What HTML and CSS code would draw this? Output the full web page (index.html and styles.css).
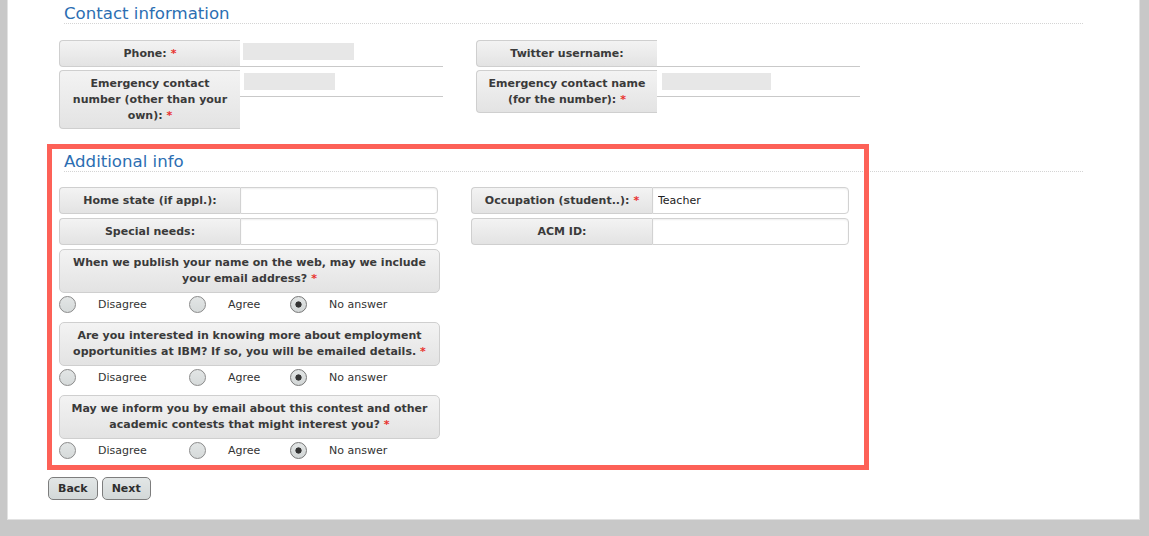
FILE: index.html
```html
<!DOCTYPE html>
<html lang="en">
<head>
    <meta charset="UTF-8">
    <meta name="viewport" content="width=device-width, initial-scale=1.0">
    <title>Registration - Additional info</title>
    <link rel="stylesheet" href="styles.css">
</head>
<body>
    <main class="page">
        <!-- Contact information -->
        <section class="group">
            <h2 class="group-title">Contact information</h2>
            <div class="contact-grid">
                <div class="col">
                    <div class="info-row">
                        <div class="tag">Phone:<span class="req">*</span></div>
                        <div class="value"><span class="blur blur-phone"></span></div>
                    </div>
                    <div class="info-row">
                        <div class="tag">Emergency contact number (other than your own):<span class="req">*</span></div>
                        <div class="value"><span class="blur blur-number"></span></div>
                    </div>
                </div>
                <div class="col">
                    <div class="info-row">
                        <div class="tag">Twitter username:</div>
                        <div class="value"></div>
                    </div>
                    <div class="info-row">
                        <div class="tag">Emergency contact name (for the number):<span class="req">*</span></div>
                        <div class="value"><span class="blur blur-name"></span></div>
                    </div>
                </div>
            </div>
        </section>

        <!-- Additional info -->
        <section class="group additional">
            <div class="highlight"></div>
            <h2 class="group-title">Additional info</h2>
            <form class="extra-grid" id="extra-form">
                <div class="col">
                    <div class="info-row">
                        <label class="tag" for="home-state">Home state (if appl.):</label>
                        <input class="field" type="text" id="home-state" name="home_state">
                    </div>
                    <div class="info-row">
                        <label class="tag" for="special-needs">Special needs:</label>
                        <input class="field" type="text" id="special-needs" name="special_needs">
                    </div>

                    <div class="question">When we publish your name on the web, may we include your email address?<span class="req">*</span></div>
                    <div class="choices">
                        <label class="choice wide"><input type="radio" name="publish_email" value="disagree"> Disagree</label>
                        <label class="choice"><input type="radio" name="publish_email" value="agree"> Agree</label>
                        <label class="choice"><input type="radio" name="publish_email" value="none" checked> No answer</label>
                    </div>

                    <div class="question">Are you interested in knowing more about employment opportunities at IBM? If so, you will be emailed details.<span class="req">*</span></div>
                    <div class="choices">
                        <label class="choice wide"><input type="radio" name="ibm_jobs" value="disagree"> Disagree</label>
                        <label class="choice"><input type="radio" name="ibm_jobs" value="agree"> Agree</label>
                        <label class="choice"><input type="radio" name="ibm_jobs" value="none" checked> No answer</label>
                    </div>

                    <div class="question">May we inform you by email about this contest and other academic contests that might interest you?<span class="req">*</span></div>
                    <div class="choices">
                        <label class="choice wide"><input type="radio" name="contest_mail" value="disagree"> Disagree</label>
                        <label class="choice"><input type="radio" name="contest_mail" value="agree"> Agree</label>
                        <label class="choice"><input type="radio" name="contest_mail" value="none" checked> No answer</label>
                    </div>
                </div>
                <div class="col">
                    <div class="info-row">
                        <label class="tag" for="occupation">Occupation (student..):<span class="req">*</span></label>
                        <input class="field" type="text" id="occupation" name="occupation" value="Teacher">
                    </div>
                    <div class="info-row">
                        <label class="tag" for="acm-id">ACM ID:</label>
                        <input class="field" type="text" id="acm-id" name="acm_id">
                    </div>
                </div>
            </form>
        </section>

        <div class="actions">
            <button type="button" class="btn">Back</button>
            <button type="submit" class="btn" form="extra-form">Next</button>
        </div>
    </main>
</body>
</html>
```
FILE: styles.css
```css
body {
    margin: 0;
    background-color: #c8c8c8;
    font-family: "DejaVu Sans", Verdana, sans-serif;
    color: #333;
}

.page {
    display: block;
    margin: 0 9px 0 7px;
    padding: 5px 50px 19px 40px;
    background-color: #fff;
    border: 1px solid #e2e2e2;
    border-top: 0;
}

.group {
    margin-left: 11px;
}

.group-title {
    margin: 0 6px 0 5px;
    font-size: 16.6px;
    font-weight: normal;
    line-height: 18px;
    color: #2c6eb2;
    border-bottom: 1px dotted #d4d4d4;
}

.col {
    display: flex;
    flex-direction: column;
    gap: 3px;
}

.contact-grid {
    display: grid;
    grid-template-columns: 384px 384px;
    column-gap: 33px;
    margin-top: 16px;
}

.info-row {
    display: flex;
    align-items: flex-start;
}

.tag {
    flex: none;
    width: 181px;
    box-sizing: border-box;
    padding: 4.5px 8px;
    border: 1px solid #cfcfcf;
    border-right: 0;
    border-radius: 4px 0 0 4px;
    background: linear-gradient(#f3f3f3, #e3e3e3);
    font-size: 11px;
    font-weight: bold;
    line-height: 16px;
    text-align: center;
    color: #3a3a3a;
}

.req {
    margin-left: 4px;
    color: #e8322e;
}

.value {
    flex: 1;
    height: 27px;
    box-sizing: border-box;
    padding-top: 3px;
    border-bottom: 1px solid #c9c9c9;
}

.blur {
    display: block;
    height: 17px;
    background-color: #e7e7e7;
}

.blur-phone {
    width: 111px;
    margin-left: 3px;
}

.blur-number {
    width: 91px;
    margin-left: 4px;
}

.blur-name {
    width: 109px;
    margin-left: 5px;
}

/* additional info */

.additional {
    position: relative;
    margin-top: 24px;
}

.highlight {
    position: absolute;
    top: -9px;
    left: -12px;
    width: 822px;
    height: 326px;
    box-sizing: border-box;
    border: 5px solid #fd6157;
    pointer-events: none;
}

.extra-grid {
    display: grid;
    grid-template-columns: 379px 378px;
    column-gap: 33px;
    align-items: start;
    margin: 15px 0 0;
}

.extra-grid .col {
    gap: 4px;
}

.field {
    flex: 1;
    min-width: 0;
    height: 27px;
    box-sizing: border-box;
    margin: 0;
    padding: 0 5px;
    border: 1px solid #d2d2d2;
    border-radius: 0 4px 4px 0;
    box-shadow: inset 0 1px 2px rgba(0, 0, 0, 0.07);
    font-family: inherit;
    font-size: 11px;
    color: #222;
    outline: none;
}

.question {
    margin-right: -2px;
    padding: 5px 8px;
    border: 1px solid #cfcfcf;
    border-radius: 5px;
    background: linear-gradient(#f3f3f3, #e3e3e3);
    font-size: 11px;
    font-weight: bold;
    line-height: 16px;
    text-align: center;
    color: #3a3a3a;
}

.choices {
    display: flex;
    align-items: center;
    height: 17px;
    margin: -1px 0 5px;
    font-size: 11px;
    color: #333;
}

.choice {
    display: flex;
    align-items: center;
    gap: 22px;
    width: 101px;
    cursor: pointer;
}

.choice.wide {
    width: 130px;
}

.choice input {
    appearance: none;
    -webkit-appearance: none;
    flex: none;
    width: 17px;
    height: 17px;
    margin: 0;
    border: 1px solid #8a8a8a;
    border-radius: 50%;
    background: linear-gradient(#e2e5e5, #d6dada);
}

.choice input:checked {
    border-color: #777;
    background: radial-gradient(circle, #333 0 2.8px, transparent 3.4px), linear-gradient(#e2e5e5, #d2d6d6);
}

.actions {
    display: flex;
    gap: 4px;
    margin-top: 13px;
}

.btn {
    height: 23px;
    padding: 0 9px;
    border: 1px solid #7d7d7d;
    border-radius: 5px;
    background: linear-gradient(#e2e6e6, #d3d8d8);
    font-family: inherit;
    font-size: 11px;
    font-weight: bold;
    color: #2f2f2f;
    cursor: pointer;
}

.btn:hover {
    background: #cfd4d4;
}
```
